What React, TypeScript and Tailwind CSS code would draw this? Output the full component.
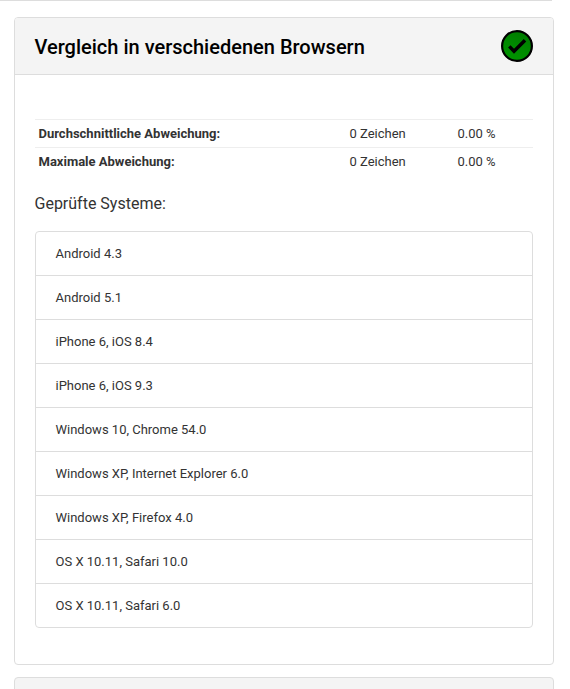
const systems = [
  'Android 4.3', 'Android 5.1', 'iPhone 6, iOS 8.4', 'iPhone 6, iOS 9.3',
  'Windows 10, Chrome 54.0', 'Windows XP, Internet Explorer 6.0',
  'Windows XP, Firefox 4.0', 'OS X 10.11, Safari 10.0', 'OS X 10.11, Safari 6.0',
];

function Row({ label }: { label: string }) {
  return (
    <div className="flex h-7 items-center border-t border-[#eee] pl-1">
      <span className="w-[311px] font-bold">{label}</span>
      <span className="w-[108px]">0 Zeichen</span>
      <span>0.00 %</span>
    </div>
  );
}

export default function App() {
  return (
    <div className="h-[689px] w-[570px] overflow-hidden bg-white font-['Roboto',sans-serif] text-[13px] text-[#333]">
      <div className="h-px w-[552px] bg-[#ddd]" />
      <section className="ml-[13.5px] mt-4 h-[648px] w-[540px] overflow-hidden rounded-[4px] border border-[#ddd]">
        <header className="flex h-[57px] items-center justify-between border-b border-[#ddd] bg-[#f4f4f4] px-5">
          <h1 className="pt-0.5 text-[20.03px] font-medium leading-6 text-black">Vergleich in verschiedenen Browsern</h1>
          <svg className="h-8 w-8" viewBox="0 0 32 32">
            <defs>
              <linearGradient id="green" x1="0.3" y1="1" x2="0.7" y2="0">
                <stop offset="0" stopColor="#009400" />
                <stop offset="0.5" stopColor="#008a00" />
                <stop offset="1" stopColor="#007a00" />
              </linearGradient>
            </defs>
            <circle cx="16" cy="16" r="14.9" fill="url(#green)" stroke="#000" strokeWidth="2.2" />
            <path d="M8.3 16.4l4.7 4.8L24 10.3" fill="none" stroke="#000" strokeWidth="3.5" />
          </svg>
        </header>
        <div className="px-5 pt-11">
          <Row label="Durchschnittliche Abweichung:" />
          <Row label="Maximale Abweichung:" />
          <h2 className="mt-[19px] text-[16px] leading-5">Geprüfte Systeme:</h2>
          <ul className="mt-[17px] rounded-[4px] border border-[#ddd]">
            {systems.map((name) => (
              <li key={name} className="flex h-11 items-center border-b border-[#ddd] px-5 last:h-[43px] last:border-b-0">{name}</li>
            ))}
          </ul>
        </div>
      </section>
      <div className="ml-[13.5px] mt-3 h-10 w-[540px] rounded-[4px] border border-[#ddd] bg-[#f4f4f4]" />
    </div>
  );
}
